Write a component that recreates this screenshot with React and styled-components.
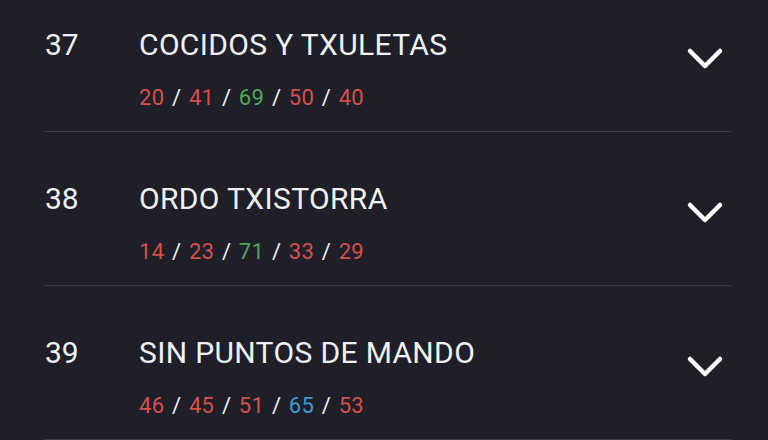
import React from "react";
import styled, { createGlobalStyle } from "styled-components";

const Global = createGlobalStyle`
  html, body { margin: 0; padding: 0; background: #1e1f29; }
  body { font-family: Roboto, "Noto Sans", sans-serif; overflow: hidden; }
`;

const Page = styled.div`
  width: 768px;
  height: 440px;
  overflow: hidden;
  background: #1e1f29;
  box-sizing: border-box;
  padding: 0 37px 0 44px;
`;

const List = styled.ul`
  list-style: none;
  margin: -22px 0 0;
  padding: 0;
`;

const Row = styled.li`
  display: flex;
  align-items: flex-start;
  padding: 49px 6px 19px 0;
  border-bottom: 1px solid #393a45;
`;

const Num = styled.div`
  width: 95px;
  box-sizing: border-box;
  padding-left: 1px;
  flex: none;
  font-size: 30px;
  line-height: 36px;
  color: #f1f1f1;
`;

const Body = styled.div`
  flex: 1;
  display: flex;
  flex-direction: column;
  gap: 21px;
`;

const Title = styled.div`
  font-size: 30px;
  line-height: 36px;
  color: #f1f1f1;
  letter-spacing: 0.35px;
`;

const Stats = styled.div`
  font-size: 22px;
  line-height: 28px;
  color: #f1f1f1;
  display: flex;
  align-items: baseline;
`;

const Value = styled.span`
  color: ${(p) => p.$c};
  letter-spacing: 0.3px;
`;

const Sep = styled.span`
  color: #f1f1f1;
  margin: 0 7.75px;
`;

const Chevron = styled.svg`
  flex: none;
  margin-top: 20px;
`;

const colors = { r: "#d65049", g: "#4fa655", b: "#3b9ade" };

const rows = [
  { n: 37, t: "COCIDOS Y TXULETAS", s: [["20", "r"], ["41", "r"], ["69", "g"], ["50", "r"], ["40", "r"]] },
  { n: 38, t: "ORDO TXISTORRA", s: [["14", "r"], ["23", "r"], ["71", "g"], ["33", "r"], ["29", "r"]] },
  { n: 39, t: "SIN PUNTOS DE MANDO", s: [["46", "r"], ["45", "r"], ["51", "r"], ["65", "b"], ["53", "r"]] },
];

export default function App() {
  return (
    <Page>
      <Global />
      <List>
        {rows.map((r) => (
          <Row key={r.n}>
            <Num>{r.n}</Num>
            <Body>
              <Title>{r.t}</Title>
              <Stats>
                {r.s.map(([v, c], i) => (
                  <React.Fragment key={i}>
                    {i > 0 && <Sep>/</Sep>}
                    <Value $c={colors[c]}>{v}</Value>
                  </React.Fragment>
                ))}
              </Stats>
            </Body>
            <Chevron width="40" height="24" viewBox="0 0 40 24">
              <polyline
                points="5,4 20,19 35,4"
                fill="none"
                stroke="#ffffff"
                strokeWidth="4.5"
                strokeLinecap="round"
                strokeLinejoin="round"
              />
            </Chevron>
          </Row>
        ))}
      </List>
    </Page>
  );
}
